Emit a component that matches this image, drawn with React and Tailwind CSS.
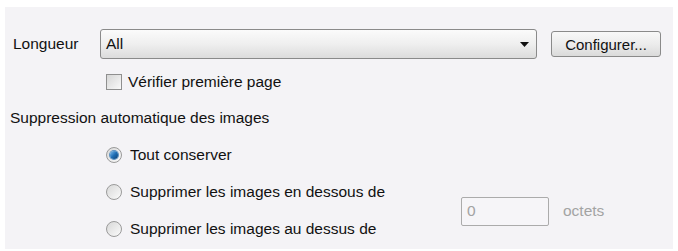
import React from "react";

function Radio({ checked }) {
    return (
        <span className="relative flex items-center justify-center w-[16px] h-[16px] rounded-full border border-[#9a9a9a] bg-gradient-to-br from-[#d8d8d8] to-[#fbfbfb] shrink-0">
            {checked && (
                <span className="w-[8px] h-[8px] rounded-full bg-gradient-to-br from-[#7fc0ee] via-[#1f6fb5] to-[#0b3f73] shadow-[0_0_0_1px_#5a90c0]" />
            )}
        </span>
    );
}

function Option({ checked, label }) {
    return (
        <div className="flex items-center h-[20px] gap-[8px]">
            <Radio checked={checked} />
            <span>{label}</span>
        </div>
    );
}

export default function App() {
    return (
        <div
            className="w-[678px] h-[251px] bg-white pt-[7px] pl-[5px] pr-[5px] pb-[2px] text-[15.5px] text-[#111]"
            style={{ fontFamily: '"Liberation Sans", Arial, sans-serif' }}
        >
            <div className="w-full h-full bg-[#f4f3f6] flex flex-col">
                {/* Longueur */}
                <div className="flex items-center mt-[22px] h-[30px]">
                    <span className="ml-[8px] w-[87px]">Longueur</span>
                    <div className="flex items-center w-[437px] h-[30px] rounded-[3px] border border-[#8a8a8a] bg-gradient-to-b from-[#fbfbfb] via-[#efefef] to-[#dcdcdc] pl-[5px] pr-[7px]">
                        <span className="flex-1">All</span>
                        <svg width="9" height="5" viewBox="0 0 9 5">
                            <path d="M0 0 H9 L4.5 5 Z" fill="#111" />
                        </svg>
                    </div>
                    <button className="ml-[14px] w-[110px] h-[26px] rounded-[3px] border border-[#8a8a8a] bg-gradient-to-b from-[#f8f8f8] via-[#ececec] to-[#dadada] text-[15px] leading-none">
                        Configurer...
                    </button>
                </div>

                {/* Vérifier première page */}
                <div className="flex items-center h-[20px] mt-[13px] ml-[101px] gap-[6px]">
                    <span className="w-[16px] h-[16px] border border-[#8f8f8f] bg-gradient-to-br from-[#d6d6d6] to-[#fafafa] shrink-0" />
                    <span>Vérifier première page</span>
                </div>

                {/* Suppression */}
                <div className="flex items-center h-[20px] mt-[16px] ml-[5px]">
                    Suppression automatique des images
                </div>

                <div className="ml-[101px] mt-[17px] flex flex-col">
                    <Option checked label="Tout conserver" />
                    <div className="flex items-center mt-[17px]">
                        <div className="flex flex-col gap-[17px] w-[355px]">
                            <Option label="Supprimer les images en dessous de" />
                            <Option label="Supprimer les images au dessus de" />
                        </div>
                        <div className="flex items-center mt-[1px]">
                            <div className="w-[88px] h-[29px] border border-[#ababab] rounded-[2px] bg-[#f6f5f8] flex items-center pl-[5px] text-[#a3a3a3]">
                                0
                            </div>
                            <span className="ml-[14px] text-[#a3a3a3]">octets</span>
                        </div>
                    </div>
                </div>
            </div>
        </div>
    );
}
